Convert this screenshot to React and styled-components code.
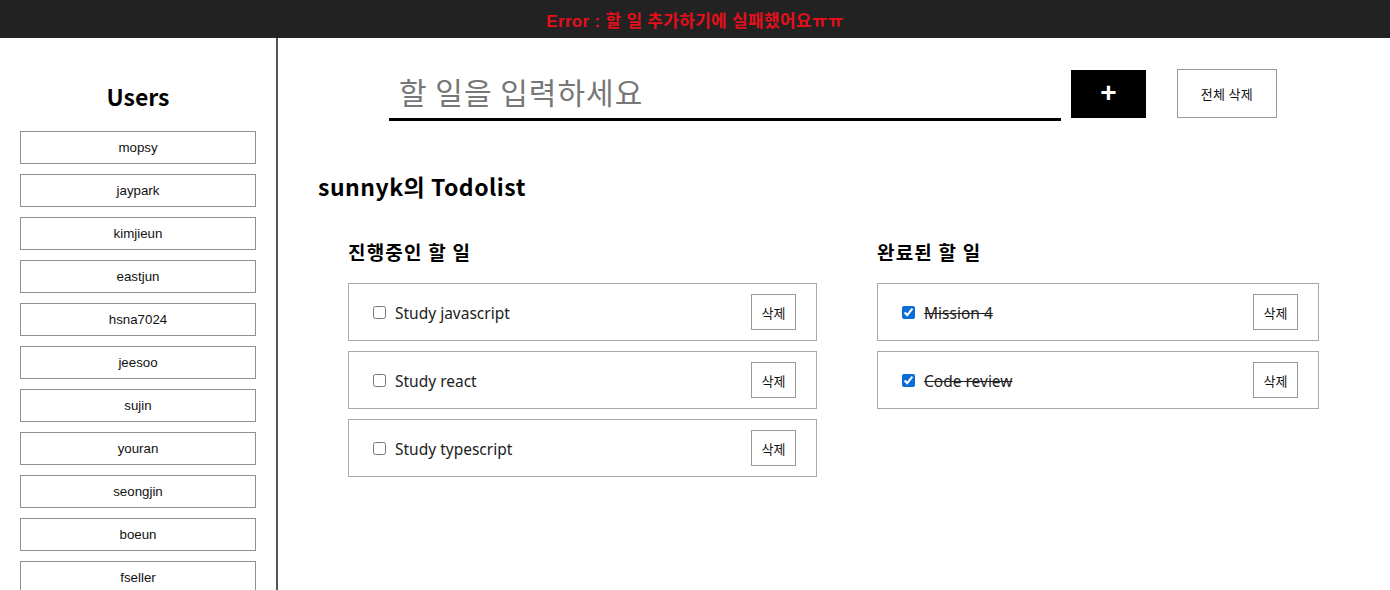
import React from "react";
import styled, { createGlobalStyle } from "styled-components";

const Global = createGlobalStyle`
  html, body { margin: 0; padding: 0; background: #fff; }
  body { font-family: "Noto Sans CJK KR", "Noto Sans", sans-serif; color: #000; overflow: hidden; }
  * { box-sizing: border-box; }
`;

const Page = styled.div`
  width: 1390px;
  height: 590px;
  display: flex;
  flex-direction: column;
`;

const ErrorBar = styled.div`
  height: 38px;
  background: #222222;
  color: #e3101c;
  display: flex;
  align-items: center;
  justify-content: center;
  font-family: "Liberation Sans", "Noto Sans CJK KR", sans-serif;
  font-weight: 700;
  font-size: 17px;
  letter-spacing: 0.3px;
  flex-shrink: 0;
`;

const Body = styled.div`
  flex: 1;
  display: flex;
  min-height: 0;
`;

const Sidebar = styled.aside`
  width: 278px;
  flex-shrink: 0;
  border-right: 2px solid #555;
  padding: 40px 20px 0;
  display: flex;
  flex-direction: column;
  align-items: stretch;
  overflow: hidden;
`;

const SideTitle = styled.h2`
  margin: 0 0 17px;
  text-align: center;
  font-size: 23px;
  font-weight: 700;
  line-height: 36px;
`;

const UserList = styled.div`
  display: flex;
  flex-direction: column;
  gap: 10px;
`;

const UserButton = styled.button`
  width: 236px;
  height: 33px;
  flex-shrink: 0;
  background: #fff;
  border: 1px solid #8f8f8f;
  font-family: "Liberation Sans", Arial, sans-serif;
  font-size: 13.3px;
  color: #111;
  padding: 0;
`;

const Main = styled.main`
  flex: 1;
  padding: 32px 40px 0;
  display: flex;
  flex-direction: column;
`;

const InputRow = styled.div`
  display: flex;
  justify-content: center;
  align-items: flex-start;
  padding-right: 2px;
`;

const TodoInput = styled.input`
  width: 672px;
  height: 51px;
  border: none;
  border-bottom: 3px solid #000;
  outline: none;
  font-family: "Noto Sans CJK KR", sans-serif;
  font-size: 30px;
  letter-spacing: 1px;
  padding: 0 10px 6px;
  color: #333;
  &::placeholder { color: #777; }
`;

const AddButton = styled.button`
  width: 75px;
  height: 48px;
  margin-left: 10px;
  background: #000;
  color: #fff;
  border: none;
  font-family: "Liberation Sans", sans-serif;
  font-weight: 700;
  font-size: 28px;
  line-height: 1;
  padding: 0 0 3px;
  display: flex;
  align-items: center;
  justify-content: center;
`;

const ClearButton = styled.button`
  width: 100px;
  height: 49px;
  margin-left: 31px;
  margin-top: -1px;
  background: #fff;
  border: 1px solid #999;
  font-family: "Noto Sans CJK KR", sans-serif;
  font-size: 13px;
  letter-spacing: 0.3px;
  color: #111;
`;

const ListTitle = styled.h1`
  margin: 48px 0 0;
  font-size: 23px;
  letter-spacing: 0.5px;
  font-weight: 700;
  line-height: 34px;
`;

const Columns = styled.div`
  display: flex;
  margin-top: 39px;
  padding-left: 30px;
  gap: 60px;
`;

const Column = styled.section`
  width: ${(p) => p.$w}px;
  display: flex;
  flex-direction: column;
`;

const ColTitle = styled.h3`
  margin: 0 0 21px;
  font-size: 19px;
  letter-spacing: 1.2px;
  font-weight: 700;
  line-height: 20px;
`;

const Items = styled.div`
  display: flex;
  flex-direction: column;
  gap: 10px;
`;

const Item = styled.div`
  height: 58px;
  border: 1px solid #a9a9a9;
  display: flex;
  align-items: center;
  padding: 0 20px 0 24px;
`;

const Check = styled.input`
  width: 13px;
  height: 13px;
  margin: 1px 9px 0 0;
  accent-color: #0b6dd8;
`;

const ItemText = styled.span`
  flex: 1;
  font-family: "Noto Sans", sans-serif;
  font-size: 15.5px;
  padding-top: 2px;
  color: #222;
  text-decoration: ${(p) => (p.$done ? "line-through" : "none")};
`;

const DeleteButton = styled.button`
  width: 45px;
  height: 36px;
  background: #fff;
  border: 1px solid #999;
  font-family: "Noto Sans CJK KR", sans-serif;
  font-size: 13px;
  color: #111;
  padding: 0;
`;

const users = ["mopsy", "jaypark", "kimjieun", "eastjun", "hsna7024", "jeesoo", "sujin", "youran", "seongjin", "boeun", "fseller"];
const doing = ["Study javascript", "Study react", "Study typescript"];
const done = ["Mission 4", "Code review"];

export default function App() {
  return (
    <Page>
      <Global />
      <ErrorBar>Error : 할 일 추가하기에 실패했어요ㅠㅠ</ErrorBar>
      <Body>
        <Sidebar>
          <SideTitle>Users</SideTitle>
          <UserList>
            {users.map((u) => (
              <UserButton key={u}>{u}</UserButton>
            ))}
          </UserList>
        </Sidebar>
        <Main>
          <InputRow>
            <TodoInput placeholder="할 일을 입력하세요" />
            <AddButton>+</AddButton>
            <ClearButton>전체 삭제</ClearButton>
          </InputRow>
          <ListTitle>sunnyk의 Todolist</ListTitle>
          <Columns>
            <Column $w={469}>
              <ColTitle>진행중인 할 일</ColTitle>
              <Items>
                {doing.map((t) => (
                  <Item key={t}>
                    <Check type="checkbox" readOnly />
                    <ItemText>{t}</ItemText>
                    <DeleteButton>삭제</DeleteButton>
                  </Item>
                ))}
              </Items>
            </Column>
            <Column $w={442}>
              <ColTitle>완료된 할 일</ColTitle>
              <Items>
                {done.map((t) => (
                  <Item key={t}>
                    <Check type="checkbox" checked readOnly />
                    <ItemText $done>{t}</ItemText>
                    <DeleteButton>삭제</DeleteButton>
                  </Item>
                ))}
              </Items>
            </Column>
          </Columns>
        </Main>
      </Body>
    </Page>
  );
}
